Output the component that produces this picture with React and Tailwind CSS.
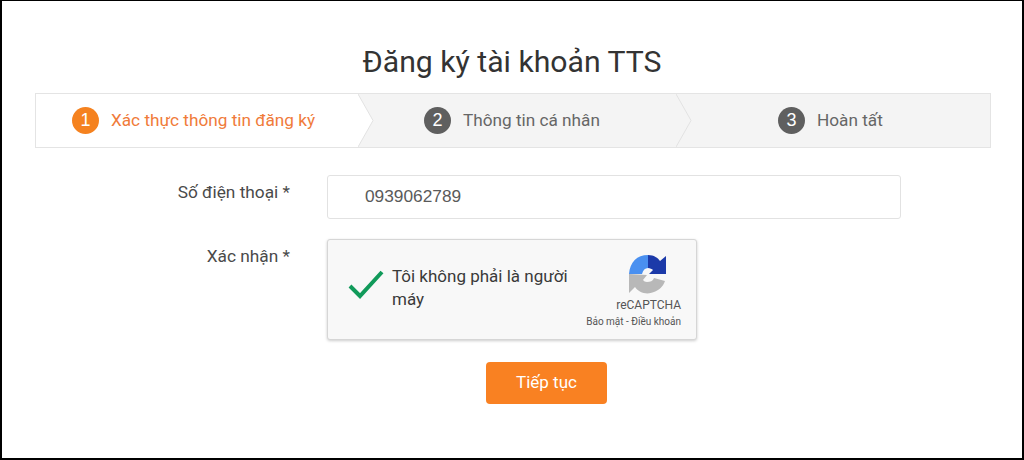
export default function App() {
  return (
    <div className="w-[1024px] h-[460px] bg-white border-l-2 border-r-2 border-b-2 border-t border-black font-['Roboto','Liberation_Sans',sans-serif] overflow-hidden">
      <h1 className="h-[92px] pt-[41px] text-center text-[30.2px] leading-[40px] font-normal text-[#333]">Đăng ký tài khoản TTS</h1>
      <div className="ml-[33px] w-[956px] h-[55px] flex border border-[#e4e4e4] bg-[#f4f4f4]">
        <Step w="w-[322px]" active n="1" label="Xác thực thông tin đăng ký" pl="pl-[36px]" />
        <Step w="w-[318px]" n="2" label="Thông tin cá nhân" pl="pl-[66px]" chevron />
        <Step w="flex-1" n="3" label="Hoàn tất" pl="pl-[102px]" chevron />
      </div>
      <div className="flex mt-[27px] h-[44px]">
        <div className="w-[288px] text-right pt-[5px] text-[17.3px] leading-[24px] text-[#4a4a4a]">Số điện thoại *</div>
        <div className="ml-[37px] w-[574px] h-[44px] bg-white border border-[#e2e2e2] rounded-[3px] pl-[37px] flex items-center text-[17.3px] text-[#5a5a5a] font-['Liberation_Sans',sans-serif]">0939062789</div>
      </div>
      <div className="flex mt-[20px]">
        <div className="w-[288px] text-right pt-[5px] text-[17.3px] leading-[24px] text-[#4a4a4a]">Xác nhận *</div>
        <div className="ml-[37px] w-[370px] h-[101px] bg-[#f8f8f8] border border-[#d6d6d6] rounded-[3px] shadow-[0_1px_3px_rgba(0,0,0,0.2)] flex">
          <div className="pl-[20px] pt-[29px]">
            <svg width="38" height="32" viewBox="0 0 38 32" fill="none">
              <path d="M2 17 L12 27 L34 3" stroke="#119a5a" strokeWidth="4" />
            </svg>
          </div>
          <div className="ml-[6px] pt-[25px] w-[200px] text-[17px] leading-[23px] text-[#3a3a3a]">Tôi không phải là người máy</div>
          <div className="flex-1 flex flex-col items-end pt-[14px] pr-[15px]">
            <svg className="mr-[13px]" width="40" height="42" viewBox="0 0 40 42">
              <path d="M1 20 C2 8 9 1 20 1 L20 14 C17 14 15 16 14 20 Z" fill="#4a90f0" />
              <path d="M20 1 C26 1 30 4 32 7 L38 2 L38 20 L21 20 L25 16 C24 15 22 14 20 14Z" fill="#1c3aa9" />
              <path d="M1 20 L1 39 L7 33 C11 39 19 41 26 38 C31 36 35 33 37 27 L26 24 C25 27 22 28 19 28 C17 28 16 27 15 26 L19 21Z" fill="#b8b8b8" />
            </svg>
            <div className="mt-[2px] text-[12px] leading-[14px] text-[#555] whitespace-nowrap">reCAPTCHA</div>
            <div className="mt-[4px] text-[10px] leading-[12px] text-[#555] whitespace-nowrap">Bảo mật - Điều khoản</div>
          </div>
        </div>
      </div>
      <div className="ml-[484px] mt-[22px] w-[121px] h-[42px] bg-[#f98122] rounded-[4px] flex items-center justify-center text-white text-[17px]">Tiếp tục</div>
    </div>
  );
}

function Step({ w, active, n, label, pl, chevron }) {
  return (
    <div className={`relative h-full flex items-center ${w} ${pl} ${active ? "bg-white" : ""}`}>
      {chevron && (
        <svg className="absolute left-0 top-0" width="16" height="53" viewBox="0 0 16 53" fill="none">
          <path d="M0 0 L15 26.5 L0 53Z" fill="#ffffff" fillOpacity={n === "2" ? 1 : 0} />
          <path d="M0 0 L15 26.5 L0 53" stroke="#e2e2e2" strokeWidth="1" />
        </svg>
      )}
      <span className={`w-[27px] h-[27px] rounded-full flex items-center justify-center text-white text-[18px] font-['Liberation_Sans',sans-serif] ${active ? "bg-[#f5821f]" : "bg-[#5f5f5f]"}`}>{n}</span>
      <span className={`ml-[12px] text-[17.2px] whitespace-nowrap ${active ? "text-[#f07b3a]" : "text-[#666]"}`}>{label}</span>
    </div>
  );
}
